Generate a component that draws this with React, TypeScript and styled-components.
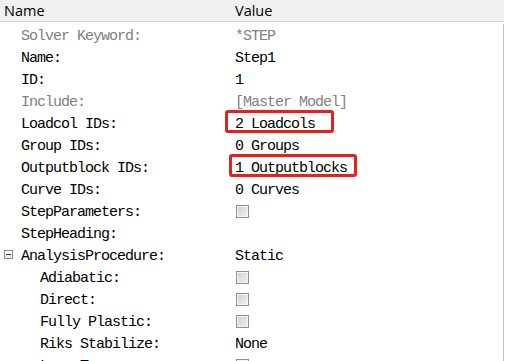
import React from 'react'
import styled, { createGlobalStyle } from 'styled-components'

const GlobalStyle = createGlobalStyle`
  html, body {
    margin: 0;
    padding: 0;
    background: #ffffff;
    overflow: hidden;
  }
`

type Value =
  | { kind: 'text'; text: string; highlight?: { left: number; width: number } }
  | { kind: 'check' }
  | { kind: 'none' }

interface PropRow {
  label: string
  value: Value
  muted?: boolean
  level?: 0 | 1
  group?: boolean
}

const rows: PropRow[] = [
  { label: 'Solver Keyword:', value: { kind: 'text', text: '*STEP' }, muted: true },
  { label: 'Name:', value: { kind: 'text', text: 'Step1' } },
  { label: 'ID:', value: { kind: 'text', text: '1' } },
  { label: 'Include:', value: { kind: 'text', text: '[Master Model]' }, muted: true },
  { label: 'Loadcol IDs:', value: { kind: 'text', text: '2 Loadcols', highlight: { left: -8, width: 109 } } },
  { label: 'Group IDs:', value: { kind: 'text', text: '0 Groups' } },
  { label: 'Outputblock IDs:', value: { kind: 'text', text: '1 Outputblocks', highlight: { left: -4, width: 128 } } },
  { label: 'Curve IDs:', value: { kind: 'text', text: '0 Curves' } },
  { label: 'StepParameters:', value: { kind: 'check' } },
  { label: 'StepHeading:', value: { kind: 'none' } },
  { label: 'AnalysisProcedure:', value: { kind: 'text', text: 'Static' }, group: true },
  { label: 'Adiabatic:', value: { kind: 'check' }, level: 1 },
  { label: 'Direct:', value: { kind: 'check' }, level: 1 },
  { label: 'Fully Plastic:', value: { kind: 'check' }, level: 1 },
  { label: 'Riks Stabilize:', value: { kind: 'text', text: 'None' }, level: 1 },
  { label: 'Long Term:', value: { kind: 'check' }, level: 1 }
]

const App = () => (
  <>
    <GlobalStyle />
    <Panel>
      <Header>
        <HeaderCell>Name</HeaderCell>
        <HeaderCell>Value</HeaderCell>
      </Header>
      <Body>
        {rows.map((row) => (
          <Row key={row.label}>
            <LabelCell level={row.level ?? 0} muted={row.muted}>
              {row.group && <Collapse />}
              {row.label}
            </LabelCell>
            <ValueCell muted={row.muted}>
              {row.value.kind === 'text' && row.value.text}
              {row.value.kind === 'check' && <CheckBox />}
              {row.value.kind === 'text' && row.value.highlight && (
                <Highlight style={{ left: row.value.highlight.left, width: row.value.highlight.width }} />
              )}
            </ValueCell>
          </Row>
        ))}
      </Body>
    </Panel>
  </>
)

const Panel = styled.div`
  width: 506px;
  height: 361px;
  display: flex;
  flex-direction: column;
  overflow: hidden;
`

const Header = styled.div`
  display: grid;
  grid-template-columns: 231px 1fr;
  flex: none;
  height: 21px;
  width: 504px;
  background: #f0f0f0;
  border-bottom: 1px solid #d6d6d6;
  box-shadow: 0 1px 0 #ffffff;
  margin-bottom: 2px;
`

const HeaderCell = styled.div`
  font-family: 'Open Sans', 'Noto Sans', sans-serif;
  font-size: 14.5px;
  color: #000;
  line-height: 21px;
  padding-left: 4px;
  white-space: nowrap;
`

const Body = styled.div`
  width: 503px;
  flex: 1;
  border-right: 1px solid #c4c4c4;
`

const Row = styled.div`
  display: grid;
  grid-template-columns: 233px 1fr;
  height: 22px;
  font-family: 'Liberation Mono', 'Courier New', monospace;
  font-size: 15px;
  letter-spacing: -1px;
`

const LabelCell = styled.div<{ level: 0 | 1; muted?: boolean }>`
  position: relative;
  box-sizing: border-box;
  height: 22px;
  padding: 3px 0 0 ${({ level }) => (level === 1 ? 40 : 21)}px;
  color: ${({ muted }) => (muted ? '#808080' : '#000000')};
  white-space: nowrap;
  line-height: 19px;
`

const ValueCell = styled.div<{ muted?: boolean }>`
  position: relative;
  box-sizing: border-box;
  height: 22px;
  padding: 3px 0 0 2px;
  color: ${({ muted }) => (muted ? '#808080' : '#000000')};
  white-space: nowrap;
  line-height: 19px;
  display: flex;
  align-items: center;
`

const Collapse = styled.span`
  position: absolute;
  left: 4px;
  top: 6px;
  width: 7px;
  height: 7px;
  border: 1px solid #8c8c8c;
  background: linear-gradient(#ffffff, #e6e6e6);

  &::after {
    content: '';
    position: absolute;
    left: 1px;
    right: 1px;
    top: 3px;
    height: 1px;
    background: #3a3a3a;
  }
`

const CheckBox = styled.span`
  display: inline-block;
  box-sizing: border-box;
  width: 13px;
  height: 13px;
  margin: -3px 0 0 1px;
  border: 1px solid #8f8f8f;
  background: linear-gradient(135deg, #cfcfcf, #f2f2f2);
  box-shadow: inset 0 0 0 1px #f4f4f4;
`

const Highlight = styled.span`
  position: absolute;
  top: -2px;
  height: 23px;
  box-sizing: border-box;
  border: 3px solid #e3221d;
  border-radius: 3px;
  pointer-events: none;
`

export default App
